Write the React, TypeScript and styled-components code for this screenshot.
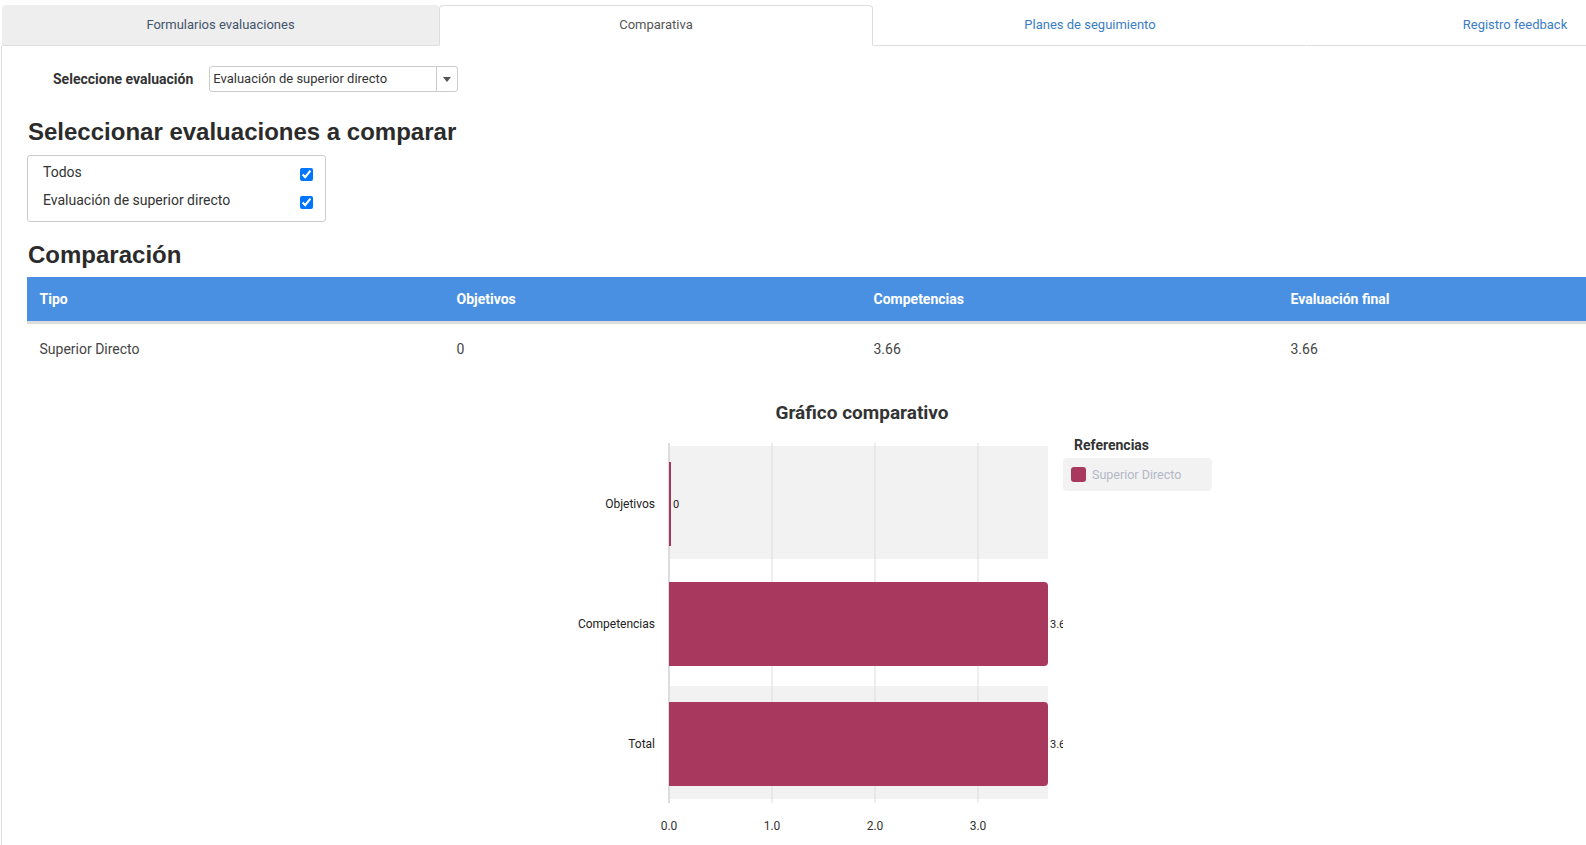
import React from "react";
import styled, { createGlobalStyle } from "styled-components";

const Global = createGlobalStyle`
  html, body { margin: 0; padding: 0; background: #fff; overflow: hidden; }
  body { font-family: Roboto, "Liberation Sans", Arial, sans-serif; color: #333; }
  * { box-sizing: border-box; }
`;

const Page = styled.div`
  width: 1586px;
  height: 845px;
  overflow: hidden;
  padding-top: 5px;
`;

const TabBar = styled.div`
  display: flex;
  padding-left: 2px;
  height: 41px;
`;

const Tab = styled.div<{ $variant: "muted" | "active" | "link"; $shift?: number }>`
  flex: 0 0 ${(p) => (p.$variant === "muted" ? 437 : 434)}px;
  height: 41px;
  display: flex;
  align-items: center;
  justify-content: center;
  padding-bottom: 2px;
  padding-right: ${(p) => p.$shift ?? 0}px;
  font-size: 13px;
  border-radius: 4px 4px 0 0;
  background: ${(p) => (p.$variant === "muted" ? "#eeeeee" : "#fff")};
  color: ${(p) =>
    p.$variant === "active" ? "#555" : p.$variant === "muted" ? "#44546a" : "#3b7dc4"};
  border: 1px solid ${(p) => (p.$variant === "active" ? "#dddddd" : "transparent")};
  border-bottom: 1px solid ${(p) => (p.$variant === "active" ? "#fff" : "#dddddd")};
`;

const Body = styled.div`
  border-left: 1px solid #dddddd;
  margin-left: 1px;
  padding-left: 25px;
  height: 800px;
`;

const SelectRow = styled.div`
  display: flex;
  align-items: center;
  padding-top: 20px;
  padding-left: 26px;
  gap: 16px;
`;

const FieldLabel = styled.label`
  font-size: 14px;
  font-weight: 700;
  color: #333;
`;

const SelectBox = styled.div`
  width: 249px;
  height: 26px;
  border: 1px solid #cccccc;
  border-radius: 3px;
  display: flex;
  align-items: stretch;
  font-size: 13px;
  color: #333;
`;

const SelectValue = styled.div`
  flex: 1;
  display: flex;
  align-items: center;
  padding-left: 3px;
  padding-bottom: 1px;
`;

const SelectArrow = styled.div`
  width: 21px;
  border-left: 1px solid #cccccc;
  display: flex;
  align-items: center;
  justify-content: center;
  &::after {
    content: "";
    border-left: 4px solid transparent;
    border-right: 4px solid transparent;
    border-top: 5px solid #555;
  }
`;

const Heading = styled.h2<{ $top: number }>`
  margin: ${(p) => p.$top}px 0 0 1px;
  font-family: "Liberation Sans", Arial, sans-serif;
  font-size: 24px;
  font-weight: 700;
  line-height: 26px;
  color: #2b2b2b;
`;

const CheckPanel = styled.div`
  margin-top: 10px;
  width: 299px;
  border: 1px solid #cccccc;
  border-radius: 3px;
  padding: 4px 12px 5px 15px;
`;

const CheckRow = styled.label`
  display: flex;
  justify-content: space-between;
  align-items: center;
  height: 28px;
  font-size: 14px;
  color: #333;
  span { margin-top: -4px; }
  input { margin: 0; width: 13px; height: 13px; }
`;

const Table = styled.div`
  margin-top: 9px;
  width: 1668px;
`;

const Row = styled.div<{ $head?: boolean }>`
  display: grid;
  grid-template-columns: repeat(4, 417px);
  height: ${(p) => (p.$head ? 47 : 48)}px;
  align-items: center;
  background: ${(p) => (p.$head ? "#4a90e2" : "#fff")};
  border-bottom: ${(p) => (p.$head ? "3px solid #dddddd" : "none")};
  color: ${(p) => (p.$head ? "#fff" : "#444")};
  font-size: 14px;
  font-weight: ${(p) => (p.$head ? 700 : 400)};
  padding-top: ${(p) => (p.$head ? 0 : 1)}px;
`;

const Cell = styled.div`
  padding-left: 12.5px;
`;

const ChartTitle = styled.div`
  margin-top: 29px;
  margin-left: 533px;
  width: 604px;
  text-align: center;
  font-size: 19px;
  font-weight: 700;
  line-height: 24px;
  color: #333;
`;

const ChartRow = styled.div`
  display: flex;
  margin-left: 533px;
  margin-top: 5px;
`;

const Legend = styled.div`
  padding-top: 2px;
  display: flex;
  flex-direction: column;
`;

const LegendTitle = styled.div`
  font-size: 14px;
  font-weight: 700;
  line-height: 26px;
  color: #333;
  padding-left: 11px;
`;

const LegendItem = styled.div`
  width: 149px;
  height: 33px;
  background: #f2f2f2;
  border-radius: 4px;
  display: flex;
  align-items: center;
  padding-left: 8px;
  gap: 6px;
  font-size: 12.5px;
  color: #b3b8c6;
`;

const Swatch = styled.span`
  width: 15px;
  height: 15px;
  border-radius: 3px;
  background: #a8385d;
`;

const BAR = "#a8385d";
const X0 = 109;
const UNIT = 103;
const MAXW = 379;
const data = [
  { label: "Objetivos", value: 0, text: "0" },
  { label: "Competencias", value: 3.66, text: "3.66" },
  { label: "Total", value: 3.66, text: "3.66" },
];

function barPath(x: number, y: number, w: number, h: number, r: number) {
  if (w < r * 2) return `M${x} ${y}h${w}v${h}h${-w}z`;
  return `M${x} ${y}h${w - r}a${r} ${r} 0 0 1 ${r} ${r}v${h - 2 * r}a${r} ${r} 0 0 1 ${-r} ${r}h${-(w - r)}z`;
}

const Chart: React.FC = () => {
  return (
    <svg width={503} height={410} style={{ display: "block" }}>
      {data.map((d, i) => (
        <rect
          key={"b" + i}
          x={X0}
          y={16 + i * 120}
          width={MAXW}
          height={113}
          fill={i === 1 ? "#ffffff" : "#f2f2f2"}
        />
      ))}
      {[0, 1, 2, 3].map((t) => (
        <g key={"g" + t}>
          <line
            x1={X0 + t * UNIT}
            x2={X0 + t * UNIT}
            y1={13}
            y2={373}
            stroke="#dddddd"
            strokeWidth={t === 0 ? 2 : 1}
          />
          <text
            x={X0 + t * UNIT}
            y={395.5}
            textAnchor="middle"
            dominantBaseline="central"
            fontSize={12}
            fontFamily="Roboto, sans-serif"
            fill="#333"
          >
            {t.toFixed(1)}
          </text>
        </g>
      ))}
      {data.map((d, i) => {
        const y = 32 + i * 120;
        const w = d.value === 0 ? 2 : MAXW;
        return (
          <g key={"d" + i}>
            <path d={barPath(X0, y, w, 84, 4)} fill={BAR} />
            <text
              x={95}
              y={y + 42}
              textAnchor="end"
              dominantBaseline="central"
              fontSize={12}
              fontFamily="Roboto, sans-serif"
              fill="#222"
            >
              {d.label}
            </text>
            <text
              x={X0 + w + 2}
              y={y + 42}
              dominantBaseline="central"
              fontSize={11}
              fontFamily="Roboto, sans-serif"
              fill="#222"
            >
              {d.text}
            </text>
          </g>
        );
      })}
    </svg>
  );
};

export default function App() {
  return (
    <Page>
      <Global />
      <TabBar>
        <Tab $variant="muted">Formularios evaluaciones</Tab>
        <Tab $variant="active">Comparativa</Tab>
        <Tab $variant="link">Planes de seguimiento</Tab>
        <Tab $variant="link" $shift={18}>
          Registro feedback
        </Tab>
      </TabBar>
      <Body>
        <SelectRow>
          <FieldLabel>Seleccione evaluación</FieldLabel>
          <SelectBox>
            <SelectValue>Evaluación de superior directo</SelectValue>
            <SelectArrow />
          </SelectBox>
        </SelectRow>
        <Heading $top={27}>Seleccionar evaluaciones a comparar</Heading>
        <CheckPanel>
          <CheckRow>
            <span>Todos</span>
            <input type="checkbox" defaultChecked />
          </CheckRow>
          <CheckRow>
            <span>Evaluación de superior directo</span>
            <input type="checkbox" defaultChecked />
          </CheckRow>
        </CheckPanel>
        <Heading $top={20}>Comparación</Heading>
        <Table>
          <Row $head>
            <Cell>Tipo</Cell>
            <Cell>Objetivos</Cell>
            <Cell>Competencias</Cell>
            <Cell>Evaluación final</Cell>
          </Row>
          <Row>
            <Cell>Superior Directo</Cell>
            <Cell>0</Cell>
            <Cell>3.66</Cell>
            <Cell>3.66</Cell>
          </Row>
        </Table>
        <ChartTitle>Gráfico comparativo</ChartTitle>
        <ChartRow>
          <Chart />
          <Legend>
            <LegendTitle>Referencias</LegendTitle>
            <LegendItem>
              <Swatch />
              Superior Directo
            </LegendItem>
          </Legend>
        </ChartRow>
      </Body>
    </Page>
  );
}
